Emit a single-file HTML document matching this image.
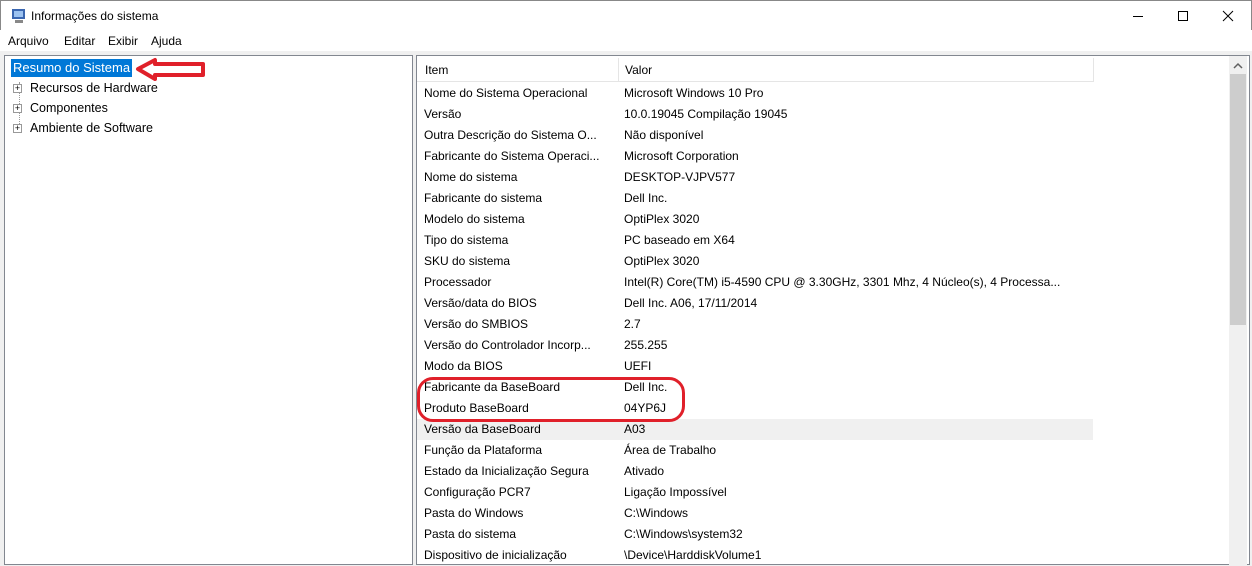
<!DOCTYPE html>
<html><head><meta charset="utf-8"><style>
*{margin:0;padding:0;box-sizing:border-box}
body{width:1252px;height:559px;overflow:hidden;background:#f0f0f0;font-family:"Liberation Sans",sans-serif;font-size:12px;color:#000;position:relative}
.title{position:absolute;left:0;top:0;width:1252px;height:30px;background:#fff;border-top:1px solid #888;border-left:1px solid #888;border-right:1px solid #888}
.menu{position:absolute;left:0;top:30px;width:1252px;height:21px;background:#fff}
.menu span{position:absolute;top:4px}
.pane{position:absolute;background:#fff;border:1px solid #828790}
.row{position:absolute;left:8px;height:21px;line-height:21px;white-space:nowrap}
.row .v{position:absolute;left:200px}
</style></head><body>
<div class="title">
<svg style="position:absolute;left:10px;top:7px" width="16" height="16"><rect x="1" y="1" width="13" height="10" fill="#3a66b0"/><rect x="3" y="3" width="9" height="6" fill="#9cc2f0"/><rect x="4" y="12" width="8" height="3" fill="#888"/></svg>
<span style="position:absolute;left:30px;top:8px">Informações do sistema</span>
<svg style="position:absolute;left:1131px;top:9px" width="110" height="14"><line x1="1" y1="6.5" x2="11" y2="6.5" stroke="#000"/><rect x="46.5" y="1.5" width="9" height="9" fill="none" stroke="#000"/><path d="M91 1L101 11M101 1L91 11" stroke="#000"/></svg>
</div>
<div class="menu"><span style="left:8px">Arquivo</span><span style="left:64px">Editar</span><span style="left:108px">Exibir</span><span style="left:151px">Ajuda</span></div>
<div class="pane" style="left:4px;top:55px;width:409px;height:510px">
<div style="position:absolute;left:6px;top:3px;background:#0078d7;color:#fff;padding:0 2px;height:18px;line-height:18px;font-size:13px">Resumo do Sistema</div>
<div style="position:absolute;left:14px;top:26px;height:44px;border-left:1px dotted #999"></div>
<div style="position:absolute;left:8px;top:22px;line-height:12px;font-size:12.5px">
<div style="height:20px;display:flex;align-items:center"><span style="width:9px;height:9px;border:1px solid #999;font-size:9px;line-height:7px;text-align:center;margin-right:8px;background:#fff">+</span>Recursos de Hardware</div>
<div style="height:20px;display:flex;align-items:center"><span style="width:9px;height:9px;border:1px solid #999;font-size:9px;line-height:7px;text-align:center;margin-right:8px;background:#fff">+</span>Componentes</div>
<div style="height:20px;display:flex;align-items:center"><span style="width:9px;height:9px;border:1px solid #999;font-size:9px;line-height:7px;text-align:center;margin-right:8px;background:#fff">+</span>Ambiente de Software</div>
</div>
<svg style="position:absolute;left:128px;top:1px" width="75" height="26"><path d="M5 12L22 3V7H70V18H22V22Z" fill="none" stroke="#e0202a" stroke-width="4" stroke-linejoin="round"/></svg>
</div>
<div class="pane" style="left:416px;top:55px;width:834px;height:510px">
<div style="position:absolute;left:0;top:0;width:676px;height:26px;border-bottom:1px solid #e5e5e5"></div>
<div style="position:absolute;left:201px;top:2px;width:1px;height:24px;background:#e5e5e5"></div>
<div style="position:absolute;left:676px;top:2px;width:1px;height:24px;background:#e5e5e5"></div>
<div class="row" style="top:4px">Item<span class="v">Valor</span></div>
<div style="position:absolute;left:0;top:363px;width:676px;height:21px;background:#f0f0f0"></div>
<div style="position:absolute;left:812px;top:0;width:18px;height:510px;background:#f0f0f0"></div>
<svg style="position:absolute;left:816px;top:6px" width="10" height="8"><path d="M1 6L5 2L9 6" fill="none" stroke="#606060" stroke-width="1.5"/></svg>
<div style="position:absolute;left:813px;top:18px;width:16px;height:251px;background:#cdcdcd"></div>
</div>
<div style="position:absolute;left:416px;top:57px">
<div class="row" style="top:26px">Nome do Sistema Operacional<span class="v">Microsoft Windows 10 Pro</span></div>
<div class="row" style="top:47px">Versão<span class="v">10.0.19045 Compilação 19045</span></div>
<div class="row" style="top:68px">Outra Descrição do Sistema O...<span class="v">Não disponível</span></div>
<div class="row" style="top:89px">Fabricante do Sistema Operaci...<span class="v">Microsoft Corporation</span></div>
<div class="row" style="top:110px">Nome do sistema<span class="v">DESKTOP-VJPV577</span></div>
<div class="row" style="top:131px">Fabricante do sistema<span class="v">Dell Inc.</span></div>
<div class="row" style="top:152px">Modelo do sistema<span class="v">OptiPlex 3020</span></div>
<div class="row" style="top:173px">Tipo do sistema<span class="v">PC baseado em X64</span></div>
<div class="row" style="top:194px">SKU do sistema<span class="v">OptiPlex 3020</span></div>
<div class="row" style="top:215px">Processador<span class="v">Intel(R) Core(TM) i5-4590 CPU @ 3.30GHz, 3301 Mhz, 4 Núcleo(s), 4 Processa...</span></div>
<div class="row" style="top:236px">Versão/data do BIOS<span class="v">Dell Inc. A06, 17/11/2014</span></div>
<div class="row" style="top:257px">Versão do SMBIOS<span class="v">2.7</span></div>
<div class="row" style="top:278px">Versão do Controlador Incorp...<span class="v">255.255</span></div>
<div class="row" style="top:299px">Modo da BIOS<span class="v">UEFI</span></div>
<div class="row" style="top:320px">Fabricante da BaseBoard<span class="v">Dell Inc.</span></div>
<div class="row" style="top:341px">Produto BaseBoard<span class="v">04YP6J</span></div>
<div class="row" style="top:362px">Versão da BaseBoard<span class="v">A03</span></div>
<div class="row" style="top:383px">Função da Plataforma<span class="v">Área de Trabalho</span></div>
<div class="row" style="top:404px">Estado da Inicialização Segura<span class="v">Ativado</span></div>
<div class="row" style="top:425px">Configuração PCR7<span class="v">Ligação Impossível</span></div>
<div class="row" style="top:446px">Pasta do Windows<span class="v">C:\Windows</span></div>
<div class="row" style="top:467px">Pasta do sistema<span class="v">C:\Windows\system32</span></div>
<div class="row" style="top:488px">Dispositivo de inicialização<span class="v">\Device\HarddiskVolume1</span></div>
</div>
<div style="position:absolute;left:417px;top:377px;width:268px;height:45px;border:3px solid #e0202a;border-radius:16px"></div>
</body></html>
